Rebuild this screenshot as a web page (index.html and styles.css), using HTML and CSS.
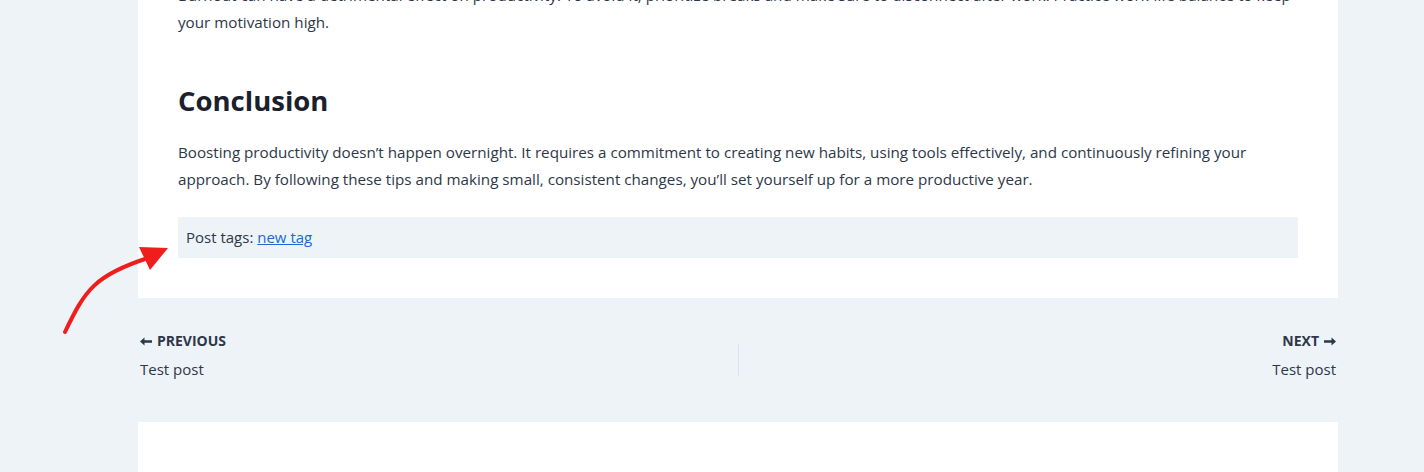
FILE: index.html
```html
<!DOCTYPE html>
<html lang="en">
<head>
    <meta charset="UTF-8">
    <meta name="viewport" content="width=device-width, initial-scale=1.0">
    <title>Boosting productivity</title>
    <link rel="stylesheet" href="styles.css">
</head>
<body>
    <div class="site">
        <article class="entry">
            <p>Burnout can have a detrimental effect on productivity. To avoid it, prioritize breaks and make sure to disconnect after work. Practice work-life balance to keep your motivation high.</p>

            <h2>Conclusion</h2>

            <p>Boosting productivity doesn’t happen overnight. It requires a commitment to creating new habits, using tools effectively, and continuously refining your approach. By following these tips and making small, consistent changes, you’ll set yourself up for a more productive year.</p>

            <div class="post-tags">Post tags: <a href="#">new tag</a></div>
        </article>

        <nav class="post-nav">
            <div class="nav-prev">
                <span class="nav-label">
                    <svg width="12" height="9" viewBox="0 0 12 9"><path d="M0 4.5 L4.5 0.5 V3.3 H12 V5.7 H4.5 V8.5 Z" fill="#2d3748"/></svg>
                    Previous
                </span>
                <a href="#">Test post</a>
            </div>
            <div class="nav-divider"></div>
            <div class="nav-next">
                <span class="nav-label">
                    Next
                    <svg width="12" height="9" viewBox="0 0 12 9"><path d="M12 4.5 L7.5 0.5 V3.3 H0 V5.7 H7.5 V8.5 Z" fill="#2d3748"/></svg>
                </span>
                <a href="#">Test post</a>
            </div>
        </nav>

        <div class="entry next-block"></div>
    </div>

    <svg class="pointer" width="180" height="110" viewBox="0 0 180 110">
        <path d="M65 102 C 85 60, 95 45, 148 28" fill="none" stroke="#f01d1d" stroke-width="4" stroke-linecap="round"/>
        <polygon points="168,18 139,17 150,40" fill="#f01d1d"/>
    </svg>
</body>
</html>
```

FILE: styles.css
```css
body {
    margin: 0;
    background-color: #eef3f8;
    font-family: "Open Sans", "Noto Sans", sans-serif;
    font-size: 15.2px;
    color: #2d3748;
    overflow: hidden;
}
.site {
    width: 1200px;
    margin: -18px 0 0 138px;
}
.entry {
    background-color: #fff;
    padding: 0 40px 40px;
}
.entry p {
    margin: 0;
    line-height: 27px;
}
.entry h2 {
    font-size: 27.5px;
    font-weight: 700;
    color: #1a202c;
    line-height: 1.5;
    margin: 44px 0 18px;
}
.post-tags {
    margin-top: 24px;
    background-color: #eef3f8;
    padding: 7px 8px;
    line-height: 27px;
    font-size: 15px;
}
.post-tags a {
    color: #2268d4;
}
.post-nav {
    display: flex;
    align-items: center;
    padding: 32px 2px 35px;
}
.nav-prev,
.nav-next {
    flex: 1;
    display: flex;
    flex-direction: column;
}
.nav-next {
    align-items: flex-end;
}
.nav-divider {
    width: 1px;
    height: 32px;
    margin-top: 3px;
    background-color: #dde3ea;
}
.nav-label {
    display: flex;
    align-items: center;
    gap: 5px;
    text-transform: uppercase;
    font-size: 14px;
    font-weight: 700;
    color: #2d3748;
    line-height: 22px;
}
.post-nav a {
    color: #2d3748;
    text-decoration: none;
    font-size: 15px;
    line-height: 35px;
}
.next-block {
    height: 60px;
}
.pointer {
    position: absolute;
    left: 0;
    top: 230px;
}
```
